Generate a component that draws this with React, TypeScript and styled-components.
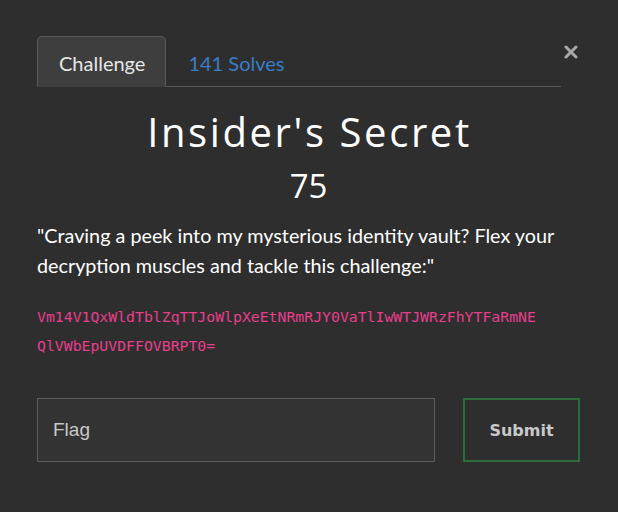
import React from "react";
import styled, { createGlobalStyle } from "styled-components";

const Global = createGlobalStyle`
  html, body { margin: 0; padding: 0; background: #2e2e2e; }
  body { font-family: Lato, "Open Sans", sans-serif; }
  * { box-sizing: border-box; }
`;

const Page = styled.div`
  width: 618px;
  height: 512px;
  background: #2e2e2e;
  padding: 36px 38px 0 37px;
`;

const Header = styled.div`
  display: flex;
  align-items: flex-start;
`;

const Tabs = styled.div`
  flex: 1;
  display: flex;
  border-bottom: 1px solid #5a5a5a;
`;

const Tab = styled.div<{ $active?: boolean }>`
  height: 51px;
  margin-bottom: -1px;
  padding: 2px 20px 0 21px;
  display: flex;
  align-items: center;
  font-family: Lato, sans-serif;
  font-size: 20px;
  color: ${(p) => (p.$active ? "#e6e6e6" : "#3b7dc4")};
  background: ${(p) => (p.$active ? "#3e3e3e" : "transparent")};
  border: 1px solid ${(p) => (p.$active ? "#5a5a5a" : "transparent")};
  border-bottom-color: ${(p) => (p.$active ? "#3e3e3e" : "transparent")};
  border-radius: 5px 5px 0 0;
`;

const Close = styled.div`
  width: 19px;
  height: 32px;
  display: flex;
  align-items: center;
  justify-content: center;
`;

const Title = styled.h1`
  margin: 21px 0 0;
  padding-left: 2px;
  text-align: center;
  font-family: "Open Sans", sans-serif;
  font-weight: 400;
  font-size: 40px;
  line-height: 48px;
  color: #ffffff;
  letter-spacing: 2.6px;
`;

const Value = styled.div`
  margin-top: 10px;
  text-align: center;
  font-family: "Open Sans", sans-serif;
  font-weight: 400;
  font-size: 33px;
  line-height: 40px;
  color: #ffffff;
`;

const Desc = styled.p`
  margin: 14px 0 0;
  font-family: Lato, sans-serif;
  font-size: 19.8px;
  line-height: 30px;
  color: #ffffff;
`;

const Code = styled.p`
  width: 506px;
  margin: 22px 0 0;
  font-family: "DejaVu Sans Mono", "Liberation Mono", monospace;
  font-size: 14.8px;
  line-height: 29px;
  color: #e83e8c;
  word-break: break-all;
`;

const Form = styled.div`
  display: flex;
  gap: 28px;
  margin-top: 38px;
`;

const Input = styled.input`
  flex: 0 0 398px;
  height: 64px;
  background: #333333;
  border: 1px solid #5c5c5c;
  color: #ddd;
  font-family: "Liberation Sans", Arial, sans-serif;
  font-size: 19px;
  padding: 0 0 0 15px;
  outline: none;
  &::placeholder { color: #c8c8c8; }
`;

const Submit = styled.button`
  flex: 0 0 117px;
  height: 64px;
  background: transparent;
  border: 2px solid #2c6b3b;
  color: #c9c9c9;
  font-family: "DejaVu Sans", sans-serif;
  font-weight: bold;
  font-size: 16px;
  cursor: pointer;
`;

export default function App() {
  return (
    <>
      <Global />
      <Page>
        <Header>
          <Tabs>
            <Tab $active>Challenge</Tab>
            <Tab>141 Solves</Tab>
          </Tabs>
          <Close>
            <svg width="14" height="14" viewBox="0 0 14 14">
              <path d="M2 2 L12 12 M12 2 L2 12" stroke="#a8a8a8" strokeWidth="3" strokeLinecap="round" />
            </svg>
          </Close>
        </Header>
        <Title>Insider's Secret</Title>
        <Value>75</Value>
        <Desc>
          "Craving a peek into my mysterious identity vault? Flex your decryption muscles and tackle this challenge:"
        </Desc>
        <Code>Vm14V1QxWldTblZqTTJoWlpXeEtNRmRJY0VaTlIwWTJWRzFhYTFaRmNEQlVWbEpUVDFFOVBRPT0=</Code>
        <Form>
          <Input placeholder="Flag" />
          <Submit>Submit</Submit>
        </Form>
      </Page>
    </>
  );
}
